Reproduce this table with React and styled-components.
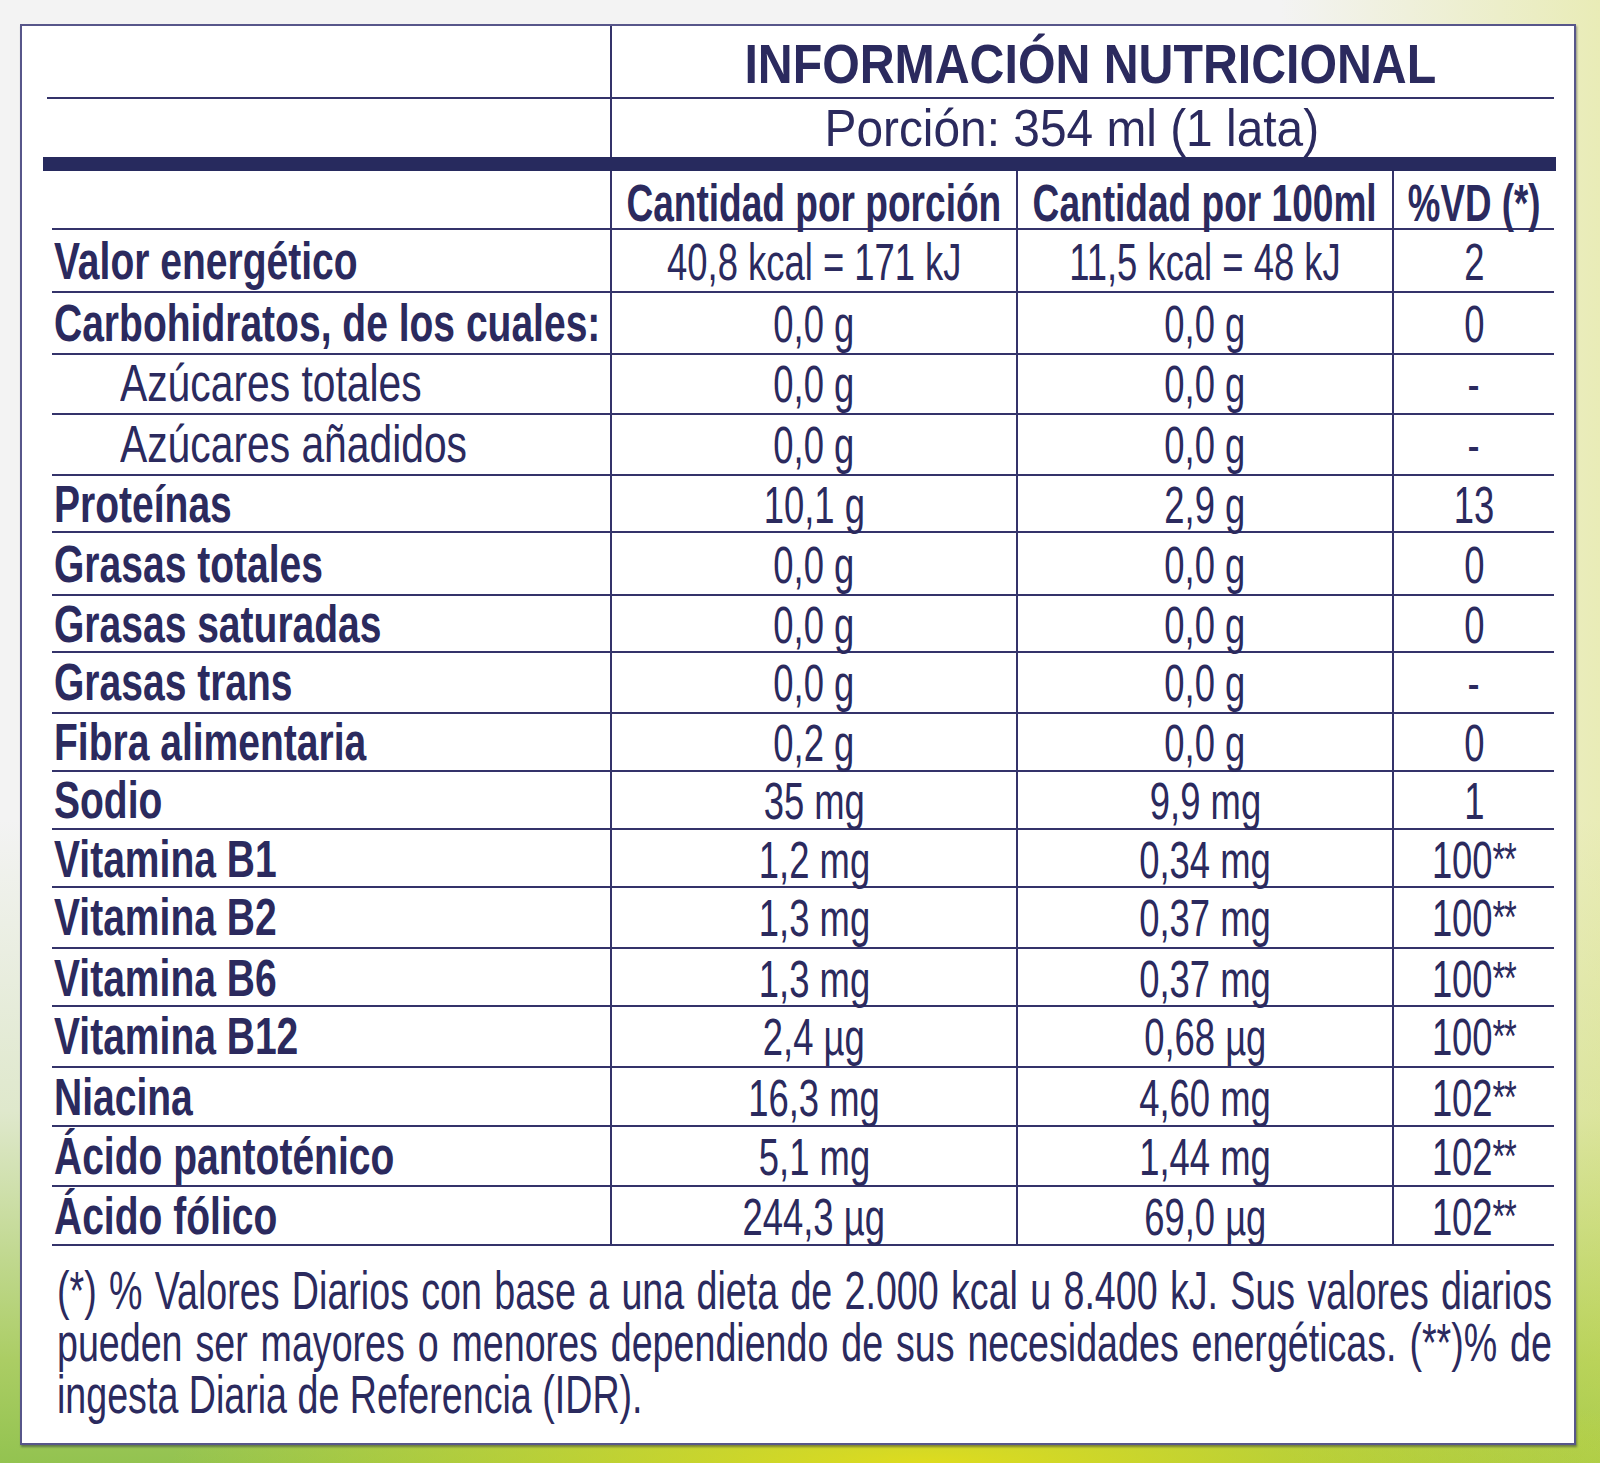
import React from "react";
import styled, { createGlobalStyle } from "styled-components";

const INK = "#2b2a5e";
const RULE = "#34336a";

const rows = [
  { label: "Valor energético", h: 63, a: "40,8 kcal = 171 kJ", b: "11,5 kcal = 48 kJ", vd: "2" },
  { label: "Carbohidratos, de los cuales:", h: 62, a: "0,0 g", b: "0,0 g", vd: "0" },
  { label: "Azúcares totales", h: 60, sub: true, a: "0,0 g", b: "0,0 g", vd: "-" },
  { label: "Azúcares añadidos", h: 61, sub: true, a: "0,0 g", b: "0,0 g", vd: "-" },
  { label: "Proteínas", h: 57, a: "10,1 g", b: "2,9 g", vd: "13" },
  { label: "Grasas totales", h: 63, a: "0,0 g", b: "0,0 g", vd: "0" },
  { label: "Grasas saturadas", h: 57, a: "0,0 g", b: "0,0 g", vd: "0" },
  { label: "Grasas trans", h: 61, a: "0,0 g", b: "0,0 g", vd: "-" },
  { label: "Fibra alimentaria", h: 58, a: "0,2 g", b: "0,0 g", vd: "0" },
  { label: "Sodio", h: 58, a: "35 mg", b: "9,9 mg", vd: "1" },
  { label: "Vitamina B1", h: 58, a: "1,2 mg", b: "0,34 mg", vd: "100", star: true },
  { label: "Vitamina B2", h: 61, a: "1,3 mg", b: "0,37 mg", vd: "100", star: true },
  { label: "Vitamina B6", h: 58, a: "1,3 mg", b: "0,37 mg", vd: "100", star: true },
  { label: "Vitamina B12", h: 61, a: "2,4 µg", b: "0,68 µg", vd: "100", star: true },
  { label: "Niacina", h: 59, a: "16,3 mg", b: "4,60 mg", vd: "102", star: true },
  { label: "Ácido pantoténico", h: 60, a: "5,1 mg", b: "1,44 mg", vd: "102", star: true },
  { label: "Ácido fólico", h: 59, a: "244,3 µg", b: "69,0 µg", vd: "102", star: true },
];

const GlobalStyle = createGlobalStyle`
  html, body {
    margin: 0;
    padding: 0;
  }
  body {
    min-height: 1463px;
    font-family: "Liberation Sans", Arial, sans-serif;
    color: ${INK};
    background:
      radial-gradient(ellipse 760px 110px at 58% 100%, #dedc1e 0%, rgba(222, 220, 30, 0) 100%),
      linear-gradient(90deg, rgba(0, 0, 0, 0) 80%, rgba(214, 222, 70, 0.35) 100%),
      linear-gradient(180deg, #f3f3f3 0%, #f3f3f3 56%, #dfe8cc 76%, #abcd64 93%, #93c350 100%);
  }
`;

const Page = styled.div`
  box-sizing: border-box;
  height: 1463px;
  padding: 24px 24px 0 20px;
`;

const Panel = styled.div`
  box-sizing: border-box;
  width: 1556px;
  height: 1421px;
  padding: 0 20px 0 30px;
  background: #fff;
  border: 2px solid #57568a;
  box-shadow: 1px 2px 2px rgba(30, 30, 60, 0.45);
  overflow: hidden;
`;

const Squeeze = styled.span`
  display: inline-block;
  white-space: nowrap;
  transform: scaleX(${(p) => p.$sx});
  transform-origin: ${(p) => p.$origin || "center"} center;
`;

const TitleText = styled(Squeeze)`
  font-size: 56px;
  font-weight: 700;
  line-height: 71px;
`;

const PortionText = styled(Squeeze)`
  font-size: 52px;
  line-height: 58px;
`;

const HeadText = styled(Squeeze)`
  font-size: 51px;
  font-weight: 700;
  line-height: 48px;
`;

const LabelText = styled(Squeeze)`
  font-size: 51px;
  font-weight: ${(p) => (p.$sub ? 400 : 700)};
  line-height: 58px;
`;

const ValueText = styled(Squeeze)`
  font-size: 52px;
  line-height: 58px;
`;

const Stars = styled.span`
  font-size: 0.9em;
  vertical-align: 0.06em;
  letter-spacing: -2px;
`;

const TitleRow = styled.div`
  box-sizing: border-box;
  display: grid;
  grid-template-columns: 563px 1fr;
  height: 73px;
  margin-left: -5px;
  border-bottom: 2px solid ${RULE};
`;

const PortionRow = styled.div`
  display: grid;
  grid-template-columns: 558px 1fr;
  height: 58px;
`;

const TopCell = styled.div`
  display: flex;
  justify-content: center;
  align-items: flex-start;
  padding: ${(p) => p.$pad || "0"};
  border-left: 2px solid ${RULE};
`;

const ThickBar = styled.div`
  height: 14px;
  margin: 0 -2px 0 -9px;
  background: #272a5e;
`;

const Row = styled.div`
  box-sizing: border-box;
  display: grid;
  grid-template-columns: 558px 406px 376px 162px;
  height: ${(p) => p.$h}px;
  border-bottom: 2px solid ${RULE};
`;

const Cell = styled.div`
  display: flex;
  align-items: flex-end;
  justify-content: ${(p) => (p.$left ? "flex-start" : "center")};
  padding-left: ${(p) => (p.$indent ? 68 : p.$left ? 2 : 0)}px;
  border-left: ${(p) => (p.$left ? "none" : `2px solid ${RULE}`)};
  min-width: 0;
`;

const Footnote = styled.div`
  width: ${1495 / 0.71}px;
  padding: 19px 0 0 7px;
  font-size: 53px;
  line-height: 52px;
  transform: scaleX(0.71);
  transform-origin: left top;
`;

const NoteLine = styled.div`
  text-align: justify;
  text-align-last: ${(p) => (p.$last ? "left" : "justify")};
`;

function DataRow({ row }) {
  return (
    <Row $h={row.h}>
      <Cell $left $indent={row.sub}>
        <LabelText $sub={row.sub} $sx={row.sub ? 0.8 : 0.765} $origin="left">
          {row.label}
        </LabelText>
      </Cell>
      <Cell>
        <ValueText $sx={0.7}>{row.a}</ValueText>
      </Cell>
      <Cell>
        <ValueText $sx={0.7}>{row.b}</ValueText>
      </Cell>
      <Cell>
        <ValueText $sx={0.7}>
          {row.vd}
          {row.star && <Stars>**</Stars>}
        </ValueText>
      </Cell>
    </Row>
  );
}

export default function App() {
  return (
    <Page>
      <GlobalStyle />
      <Panel>
        <TitleRow>
          <div />
          <TopCell $pad="2px 0 0 14px">
            <TitleText $sx={0.862}>INFORMACIÓN NUTRICIONAL</TitleText>
          </TopCell>
        </TitleRow>
        <PortionRow>
          <div />
          <TopCell $pad="0 22px 0 0">
            <PortionText $sx={0.92}>Porción: 354 ml (1 lata)</PortionText>
          </TopCell>
        </PortionRow>
        <ThickBar />
        <Row $h={59}>
          <Cell $left />
          <Cell>
            <HeadText $sx={0.727}>Cantidad por porción</HeadText>
          </Cell>
          <Cell>
            <HeadText $sx={0.727}>Cantidad por 100ml</HeadText>
          </Cell>
          <Cell>
            <HeadText $sx={0.72}>%VD (*)</HeadText>
          </Cell>
        </Row>
        {rows.map((row) => (
          <DataRow key={row.label} row={row} />
        ))}
        <Footnote>
          <NoteLine>
            (*) % Valores Diarios con base a una dieta de 2.000 kcal u 8.400 kJ. Sus valores diarios
          </NoteLine>
          <NoteLine>
            pueden ser mayores o menores dependiendo de sus necesidades energéticas. (**)% de
          </NoteLine>
          <NoteLine $last>ingesta Diaria de Referencia (IDR).</NoteLine>
        </Footnote>
      </Panel>
    </Page>
  );
}
